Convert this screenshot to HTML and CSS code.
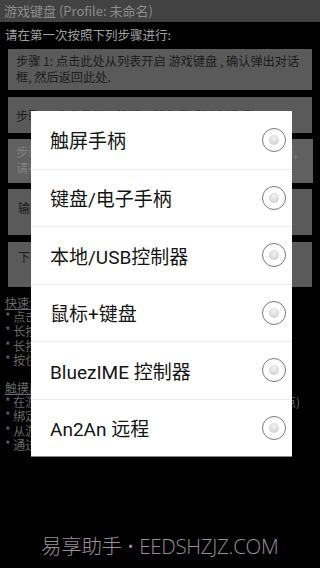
FILE: index.html
```html
<!DOCTYPE html>
<html>
<head>
<meta charset="utf-8">
<link rel="stylesheet" href="styles.css">
</head>
<body>
<div class="screen">
  <div class="titlebar">游戏键盘 (Profile: 未命名)</div>
  <div class="content">
    <div class="intro">请在第一次按照下列步骤进行:</div>
    <div class="btn step1">步骤 1: 点击此处从列表开启 游戏键盘 , 确认弹出对话<br>框, 然后返回此处.</div>
    <div class="btn step2">步骤 2: 点击此处切换输入法为游戏键盘模式</div>
    <div class="btn disabled">步骤 3: 选择游戏手柄的类型及连接方式后, 请按照画,<br>请在此处完成设定.</div>
    <div class="btn single in">输入法切换</div>
    <div class="btn single dl">下载游戏配置文件</div>
    <div class="help">
      <div class="head">快速说明</div>
      <div>* 点击按钮进入各项设置</div>
      <div>* 长按按钮查看说明</div>
      <div>* 长按菜单键打开输入法</div>
      <div>* 按住返回键退出程序</div>
      <div class="head gap">触摸屏手柄</div>
      <div>* 在游戏中显示虚拟按键并可以自由调整 (按键的位置点)</div>
      <div>* 绑定按键到屏幕</div>
      <div>* 从游戏配置中读取</div>
      <div>* 通过设置调整透明度</div>
    </div>
  </div>
  <div class="watermark">易享助手 • EEDSHZJZ.COM</div>

  <div class="dialog">
    <div class="item"><span>触屏手柄</span><i class="radio"></i></div>
    <div class="item"><span>键盘/电子手柄</span><i class="radio"></i></div>
    <div class="item"><span>本地/USB控制器</span><i class="radio"></i></div>
    <div class="item"><span>鼠标+键盘</span><i class="radio"></i></div>
    <div class="item"><span>BluezIME 控制器</span><i class="radio"></i></div>
    <div class="item"><span>An2An 远程</span><i class="radio"></i></div>
  </div>
</div>
</body>
</html>
```
FILE: styles.css
```css
html, body {
  margin: 0;
  padding: 0;
  background: #000;
}
body {
  font-family: "Noto Sans CJK SC", "Roboto", sans-serif;
}
.screen {
  position: relative;
  width: 320px;
  height: 568px;
  overflow: hidden;
  background: #000;
}
.titlebar {
  height: 22px;
  line-height: 22px;
  background: #424242;
  color: #8c8c8c;
  font-size: 13px;
  padding-left: 4px;
  white-space: nowrap;
}
.content {
  padding: 0 8px;
}
.intro {
  color: #a2a2a2;
  font-size: 12.5px;
  height: 27px;
  line-height: 26px;
  margin-left: -3px;
  white-space: nowrap;
}
.btn {
  background: #5a5a5a;
  color: #1c1c1c;
  font-size: 12.2px;
  line-height: 16px;
  box-sizing: border-box;
  padding: 0 0 0 8px;
  overflow: hidden;
  white-space: nowrap;
}
.step1 {
  height: 41px;
  padding-top: 4px;
  margin-bottom: 7px;
}
.step2 {
  height: 36px;
  padding-top: 11px;
  margin-bottom: 6px;
}
.btn.disabled {
  background: #606060;
  color: #828282;
  height: 44px;
  padding-top: 5px;
  margin-right: -1px;
  margin-bottom: 6px;
}
.btn.single {
  padding-left: 10px;
}
.btn.in {
  height: 46px;
  padding-top: 11px;
  margin-bottom: 7px;
}
.btn.dl {
  height: 45px;
  padding-top: 7px;
}
.help {
  color: #6a6a6a;
  font-size: 12px;
  line-height: 14.2px;
  margin-left: -3px;
  margin-top: 9px;
  white-space: nowrap;
}
.help .head {
  text-decoration: underline;
}
.help .gap {
  margin-top: 14px;
}
.watermark {
  position: absolute;
  left: 41px;
  top: 530px;
  color: #9a8e9c;
  font-family: "Open Sans", "Noto Sans CJK SC", sans-serif;
  font-weight: 300;
  font-size: 20.5px;
  letter-spacing: -0.3px;
  white-space: nowrap;
}
.dialog {
  position: absolute;
  left: 31px;
  top: 111px;
  width: 261px;
  background: #fff;
  border-bottom: 1px solid #8a8a8a;
}
.item {
  height: 57.5px;
  display: flex;
  align-items: center;
  justify-content: space-between;
  padding: 0 6px 0 19px;
  box-sizing: border-box;
  border-top: 1px solid #ececec;
  font-size: 19px;
  color: #141414;
}
.item:first-child {
  border-top: none;
}
.item span {
  white-space: nowrap;
  font-family: "Roboto", "Noto Sans CJK SC", sans-serif;
}
.radio {
  width: 22px;
  height: 22px;
  border: 1.6px solid #7a7a7a;
  border-radius: 50%;
  display: flex;
  align-items: center;
  justify-content: center;
  background: #fff;
}
.radio::after {
  content: "";
  width: 10px;
  height: 10px;
  border-radius: 50%;
  background: radial-gradient(circle at 50% 35%, #f4f4f4 0%, #d4d4d4 70%, #c8c8c8 100%);
}
```
